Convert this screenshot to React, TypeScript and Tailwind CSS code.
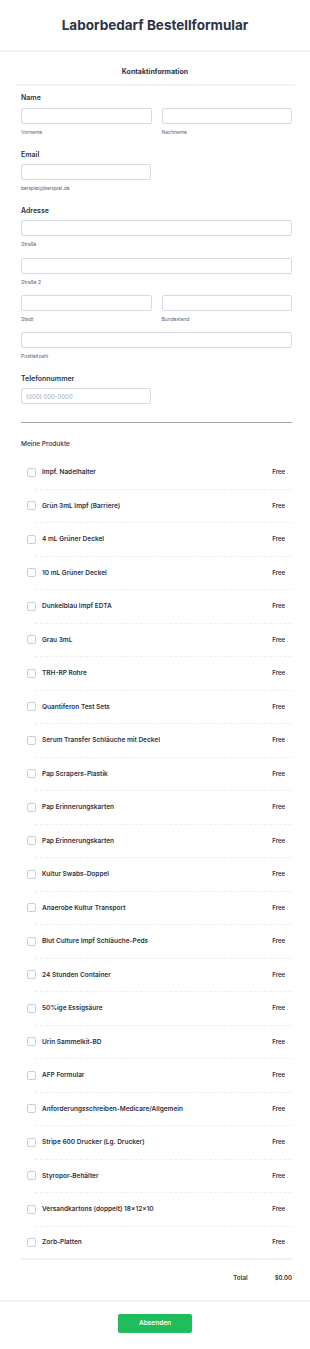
import React from "react";

const products = [
  "Impf. Nadelhalter",
  "Grün 3mL Impf (Barriere)",
  "4 mL Grüner Deckel",
  "10 mL Grüner Deckel",
  "Dunkelblau Impf EDTA",
  "Grau 3mL",
  "TRH-RP Rohre",
  "Quantiferon Test Sets",
  "Serum Transfer Schläuche mit Deckel",
  "Pap Scrapers-Plastik",
  "Pap Erinnerungskarten",
  "Pap Erinnerungskarten",
  "Kultur Swabs-Doppel",
  "Anaerobe Kultur Transport",
  "Blut Culture Impf Schläuche-Peds",
  "24 Stunden Container",
  "50%ige Essigsäure",
  "Urin Sammelkit-BD",
  "AFP Formular",
  "Anforderungsschreiben-Medicare/Allgemein",
  "Stripe 600 Drucker (Lg. Drucker)",
  "Styropor-Behälter",
  "Versandkartons (doppelt) 18×12×10",
  "Zorb-Platten",
];

function Label({ children, className }: { children: React.ReactNode; className?: string }) {
  return (
    <div className={"h-[10px] leading-[10px] text-[7px] font-semibold text-[#2c3345] " + (className ?? "")}>
      {children}
    </div>
  );
}

function Input({ className, placeholder }: { className?: string; placeholder?: string }) {
  return (
    <div
      className={
        "h-[16px] border border-[#d8dae3] rounded-[2px] bg-white flex items-center px-[4px] text-[6px] text-[#a3a9b6] " +
        (className ?? "")
      }
    >
      {placeholder}
    </div>
  );
}

function Sub({ children }: { children: React.ReactNode }) {
  return <div className="mt-[4px] h-[8px] leading-[8px] text-[5px] text-[#57647e]">{children}</div>;
}

function ProductRow({ name, last }: { name: string; last: boolean }) {
  return (
    <div className="h-[33.5px] flex flex-col">
      <div className="flex-1 flex items-center pl-[6px] pr-[7px]">
        <div className="w-[9px] h-[9px] border border-[#c9ced9] rounded-[2px] bg-white shrink-0" />
        <span className="ml-[6px] flex-1 leading-[10px] text-[6.5px] font-semibold text-[#2c3345]">{name}</span>
        <span className="leading-[10px] text-[6px] font-semibold text-[#2c3345]">Free</span>
      </div>
      {last ? (
        <div className="h-[2px] bg-[#f1f2f6]" />
      ) : (
        <div className="ml-[14px] border-t border-dashed border-[#eceef3]" />
      )}
    </div>
  );
}

export default function App() {
  return (
    <div className="w-[310px] min-h-[1349px] bg-white font-['Inter',sans-serif] text-[#2c3345]">
      <div className="h-[52px] flex items-center justify-center border-b-2 border-[#f3f3f5]">
        <h1 className="text-[13.5px] font-bold text-[#2c3345]">Laborbedarf Bestellformular</h1>
      </div>

      <div className="px-[15px]">
        <div className="mt-[15px] pb-[7px] border-b-2 border-[#f3f3f5] text-center leading-[10px] text-[7px] font-bold">
          Kontaktinformation
        </div>

        <div className="pl-[6px] pr-[3px]">
          <Label className="mt-[7px]">Name</Label>
          <div className="mt-[5px] grid grid-cols-2 gap-[10px]">
            <div>
              <Input />
              <Sub>Vorname</Sub>
            </div>
            <div>
              <Input />
              <Sub>Nachname</Sub>
            </div>
          </div>

          <Label className="mt-[14px]">Email</Label>
          <Input className="mt-[4px] w-[130px]" />
          <Sub>beispiel@beispiel.de</Sub>

          <Label className="mt-[14px]">Adresse</Label>
          <Input className="mt-[4px]" />
          <Sub>Straße</Sub>
          <Input className="mt-[10px]" />
          <Sub>Straße 2</Sub>
          <div className="mt-[9px] grid grid-cols-2 gap-[10px]">
            <div>
              <Input />
              <Sub>Stadt</Sub>
            </div>
            <div>
              <Input />
              <Sub>Bundesland</Sub>
            </div>
          </div>
          <Input className="mt-[9px]" />
          <Sub>Postleitzahl</Sub>

          <Label className="mt-[14px]">Telefonnummer</Label>
          <Input className="mt-[4px] w-[130px]" placeholder="(000) 000-0000" />

          <div className="mt-[18px] h-px bg-[#a3a7ae]" />

          <div className="mt-[16px] h-[10px] leading-[10px] text-[6.5px] font-medium text-[#2c3345]">
            Meine Produkte
          </div>

          <div className="mt-[7px]">
            {products.map((p, i) => (
              <ProductRow key={i} name={p} last={i === products.length - 1} />
            ))}
          </div>

          <div className="mt-[13px] pb-[17px] flex justify-end items-center leading-[10px] text-[6px] font-semibold">
            <span>Total</span>
            <span className="ml-[27px]">$0.00</span>
          </div>
        </div>
      </div>

      <div className="border-t-2 border-[#f3f3f5] flex justify-center pt-[12px] pb-[17px]">
        <button className="w-[74px] h-[19px] rounded-[2px] bg-[#1fbd5c] text-white text-[6.5px] font-semibold">
          Absenden
        </button>
      </div>
    </div>
  );
}
